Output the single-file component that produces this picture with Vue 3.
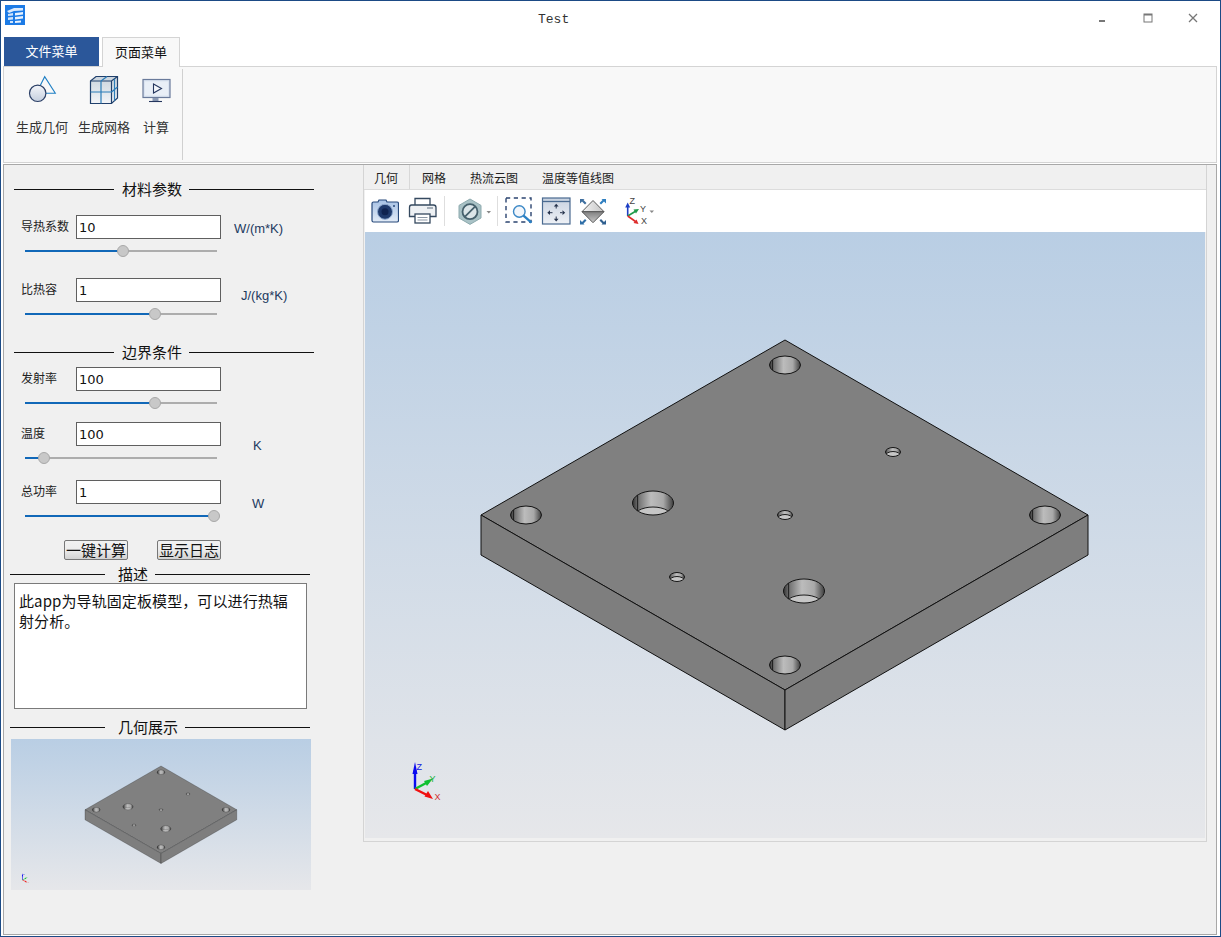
<script setup>
const fields = [
  { label: '导热系数', value: '10', unit: 'W/(m*K)', cls: 'f1', thumb: 98 },
  { label: '比热容', value: '1', unit: 'J/(kg*K)', cls: 'f2', thumb: 130 },
]
const fields2 = [
  { label: '发射率', value: '100', unit: '', cls: 'f3', thumb: 130 },
  { label: '温度', value: '100', unit: 'K', cls: 'f4', thumb: 19 },
  { label: '总功率', value: '1', unit: 'W', cls: 'f5', thumb: 189 },
]
const tabs = ['几何', '网格', '热流云图', '温度等值线图']
const holes = [
  { x: 785, y: 365, rx: 15.5, ry: 9, seam: 0.8 },
  { x: 526, y: 515, rx: 15.5, ry: 9, seam: 0.8 },
  { x: 1045, y: 515, rx: 15.5, ry: 9, seam: 0.8 },
  { x: 785, y: 665, rx: 15.5, ry: 9, seam: 0.8 },
  { x: 653, y: 503, rx: 20.5, ry: 12, seam: 0.75, floor: 16 },
  { x: 804, y: 591, rx: 20.5, ry: 12, seam: 0.75, floor: 16 },
  { x: 893, y: 452, rx: 7.5, ry: 4.5, floor: 4 },
  { x: 785, y: 515, rx: 7.5, ry: 4.5, floor: 4 },
  { x: 677, y: 577, rx: 7.5, ry: 4.5, floor: 4 },
]
</script>

<template>
  <div class="window">
    <header class="titlebar">
      <svg class="logo" width="20" height="20" viewBox="0 0 20 20">
        <rect width="20" height="20" fill="#1c7be6" />
        <path d="M2 6 L9 3 L18 3 L18 5.5 L9 6 L4 8 Z" fill="#dbeafc" />
        <path d="M3 9 L8 8 L8 10.5 L3 11 Z M3 12.5 L8 12 L8 14.5 L3 15 Z M5 16 L8 16 L8 18 L5 18 Z" fill="#cfe3fb" />
        <path d="M10 8 L18 7 L18 9.5 L10 10.5 Z M10 12 L18 11 L18 13.5 L10 14.5 Z M10 16 L16 15.5 L16 17.5 L10 18 Z" fill="#eaf3fe" />
      </svg>
      <div class="title">Test</div>
      <div class="controls">
        <span class="ctl"><svg width="10" height="10" viewBox="0 0 10 10"><rect x="1" y="7" width="6" height="2" fill="#777" /></svg></span>
        <span class="ctl"><svg width="10" height="10" viewBox="0 0 10 10"><rect x="1" y="1" width="8" height="8" fill="none" stroke="#777" /><rect x="1" y="1" width="8" height="1.5" fill="#777" /></svg></span>
        <span class="ctl"><svg width="10" height="10" viewBox="0 0 10 10"><path d="M1 1 L9 9 M9 1 L1 9" stroke="#777" stroke-width="1.3" /></svg></span>
      </div>
    </header>

    <nav class="menutabs">
      <div class="mtab file">文件菜单</div>
      <div class="mtab page">页面菜单</div>
    </nav>

    <section class="ribbon">
      <div class="rgroup">
        <div class="rbtn b1">
          <svg width="30" height="30" viewBox="27 76 30 30">
            <defs>
              <linearGradient id="gBall" x1="0" y1="0" x2="0" y2="1"><stop offset="0" stop-color="#f4f6fa" /><stop offset="1" stop-color="#c4cede" /></linearGradient>
              <linearGradient id="gCube" x1="0" y1="0" x2="0" y2="1"><stop offset="0" stop-color="#c9d3dc" /><stop offset="1" stop-color="#f3f5f8" /></linearGradient>
            </defs>
            <path d="M40 87 L44.7 77.7 L55.3 94.3 L45.5 94.3" fill="none" stroke="#1f7fc4" stroke-width="1.1" />
            <circle cx="37.7" cy="94.3" r="8.2" fill="url(#gBall)" stroke="#2b3f66" stroke-width="1.2" />
          </svg>
          <span>生成几何</span>
        </div>
        <div class="rbtn b2">
          <svg width="30" height="30" viewBox="89 75 30 30">
            <path d="M90.5 81 L96 76.5 L117.5 76.5 L117.5 98 L111.5 103.5 L90.5 103.5 Z" fill="url(#gCube)" stroke="#20406c" stroke-width="1.2" />
            <path d="M90.5 81 L111.5 81 L117.5 76.5 M111.5 81 L111.5 103.5" fill="none" stroke="#20406c" stroke-width="1.2" />
            <path d="M101 81 L101 103.5 M90.5 92 L111.5 92 M101 81 L107 76.5 M114.5 78.8 L114.5 100.7 M111.5 92 L117.5 87" fill="none" stroke="#2b7cb8" stroke-width="1.2" />
          </svg>
          <span>生成网格</span>
        </div>
        <div class="rbtn b3">
          <svg width="30" height="30" viewBox="141 75 30 30">
            <rect x="143" y="79.5" width="27" height="18" fill="#dbe4f1" stroke="#6a7b9b" stroke-width="1.2" />
            <rect x="145" y="81.5" width="23" height="14" fill="#e9eff7" />
            <path d="M153.5 84 L161.5 88.5 L153.5 93 Z" fill="#f3f6fb" stroke="#24365e" stroke-width="1.1" />
            <rect x="152.5" y="98" width="6" height="3" fill="#8a99b3" />
            <path d="M149 101.5 L162 101.5" stroke="#24365e" stroke-width="1.1" />
          </svg>
          <span>计算</span>
        </div>
      </div>
    </section>

    <main class="frame">
      <aside class="panel">
        <div class="sec s1"><i class="ln"></i><b>材料参数</b><i class="ln r"></i></div>
        <template v-for="f in fields" :key="f.label">
          <div class="field" :class="f.cls">
            <label>{{ f.label }}</label>
            <div class="inp">{{ f.value }}</div>
            <span class="unit">{{ f.unit }}</span>
          </div>
          <div class="slider">
            <i class="fill" :style="{ width: f.thumb + 'px' }"></i>
            <i class="thumb" :style="{ left: f.thumb - 6 + 'px' }"></i>
          </div>
        </template>

        <div class="sec s2"><i class="ln"></i><b>边界条件</b><i class="ln r"></i></div>
        <template v-for="f in fields2" :key="f.label">
          <div class="field" :class="f.cls">
            <label>{{ f.label }}</label>
            <div class="inp">{{ f.value }}</div>
            <span class="unit">{{ f.unit }}</span>
          </div>
          <div class="slider">
            <i class="fill" :style="{ width: f.thumb + 'px' }"></i>
            <i class="thumb" :style="{ left: f.thumb - 6 + 'px' }"></i>
          </div>
        </template>

        <div class="actions">
          <button type="button">一键计算</button>
          <button type="button">显示日志</button>
        </div>

        <div class="sec s3"><i class="ln"></i><b>描述</b><i class="ln r"></i></div>
        <div class="desc">此app为导轨固定板模型，可以进行热辐<br />射分析。</div>

        <div class="sec s4"><i class="ln"></i><b>几何展示</b><i class="ln r"></i></div>
        <svg class="thumbview" width="300" height="151" viewBox="185 232 1200 604">
          <use href="#plateScene" />
          <use href="#axisMark" transform="translate(-184 7)" />
        </svg>
      </aside>

      <section class="pane">
        <div class="vtabs">
          <div v-for="(t, i) in tabs" :key="t" class="vtab" :class="{ on: i === 0 }">{{ t }}</div>
        </div>
        <div class="toolbar">
          <svg class="t1" width="28" height="42" viewBox="371 190 28 42">
            <defs>
              <linearGradient id="gCam" x1="0" y1="0" x2="0" y2="1"><stop offset="0" stop-color="#a5c0e4" /><stop offset="1" stop-color="#e2ebf7" /></linearGradient>
              <linearGradient id="gFit" x1="0" y1="0" x2="0" y2="1"><stop offset="0" stop-color="#c8d2e0" /><stop offset="1" stop-color="#eef1f6" /></linearGradient>
              <linearGradient id="gIsoT" x1="0" y1="0" x2="1" y2="0"><stop offset="0" stop-color="#f4f4f4" /><stop offset="1" stop-color="#c4c4c4" /></linearGradient>
              <linearGradient id="gIsoB" x1="0" y1="0" x2="0" y2="1"><stop offset="0" stop-color="#808080" /><stop offset="1" stop-color="#c8c8c8" /></linearGradient>
            </defs>
            <path d="M373.5 202 L378 202 L379 200 L386 200 L387 202 L397 202 Q398.5 202 398.5 203.5 L398.5 220.5 Q398.5 222 397 222 L373.5 222 Q372 222 372 220.5 L372 203.5 Q372 202 373.5 202 Z" fill="url(#gCam)" stroke="#27497b" stroke-width="1.2" />
            <circle cx="385" cy="211.8" r="7.5" fill="#1f3a6c" stroke="#8ea9cf" />
            <circle cx="385" cy="211.8" r="3.5" fill="#0f2350" />
            <circle cx="394" cy="206" r="1" fill="#27497b" />
          </svg>
          <svg class="t2" width="29" height="42" viewBox="408 190 29 42">
            <path d="M415 205 L415 198.5 L430 198.5 L430 205" fill="#fff" stroke="#35495f" stroke-width="1.3" />
            <path d="M411.5 205 L433.5 205 Q436 205 436 207.5 L436 216.5 L430 216.5 L415 216.5 L409.5 216.5 L409.5 207.5 Q409.5 205 411.5 205 Z" fill="#eef1f4" stroke="#35495f" stroke-width="1.3" />
            <rect x="415" y="214" width="15" height="9" fill="#fff" stroke="#35495f" stroke-width="1.3" />
            <path d="M417.5 217.5 L427.5 217.5 M417.5 220 L427.5 220" stroke="#8b97a5" />
            <path d="M427 208 L433 208" stroke="#8b97a5" stroke-width="1.5" />
          </svg>
          <i class="sep s-a"></i>
          <svg class="t3" width="34" height="42" viewBox="458 190 34 42">
            <path d="M470 199 L481 205.4 L481 218 L470 224.4 L459 218 L459 205.4 Z" fill="#a9c2c6" stroke="#8daaae" />
            <circle cx="470" cy="211.7" r="7.5" fill="#dbe5e8" stroke="#45606c" stroke-width="1.8" />
            <path d="M465 216.7 L475 206.7" stroke="#45606c" stroke-width="1.8" />
            <path d="M486.5 211 L491 211 L488.8 213.5 Z" fill="#888" />
          </svg>
          <i class="sep s-b"></i>
          <svg class="t4" width="29" height="42" viewBox="504 190 29 42">
            <rect x="506" y="198" width="25" height="24" fill="none" stroke="#2b4470" stroke-width="1.4" stroke-dasharray="4.2 3.6" />
            <circle cx="519.3" cy="211.5" r="5.8" fill="#f2f6fb" stroke="#3b88c6" stroke-width="1.4" />
            <path d="M523.5 215.7 L531.5 222.7" stroke="#2a80c4" stroke-width="2.4" />
          </svg>
          <svg class="t5" width="30" height="42" viewBox="541 190 30 42">
            <rect x="542.5" y="198" width="27.5" height="26" fill="url(#gFit)" stroke="#4a6a90" stroke-width="1.2" />
            <path d="M542.5 201.5 L570 201.5" stroke="#4a6a90" stroke-width="1.3" />
            <path d="M556.2 203.8 L553.8 206.5 L558.6 206.5 Z M556.2 221.5 L553.8 218.8 L558.6 218.8 Z M547.3 212.7 L550 210.3 L550 215.1 Z M565.2 212.7 L562.5 210.3 L562.5 215.1 Z" fill="#26334c" />
            <path d="M556.2 206 L556.2 208.5 M556.2 216.5 L556.2 219 M550 212.7 L552.5 212.7 M560 212.7 L562.5 212.7" stroke="#26334c" />
          </svg>
          <svg class="t6" width="30" height="42" viewBox="578 190 30 42">
            <path d="M593 200.5 L604 211.7 L582 211.7 Z" fill="url(#gIsoT)" stroke="#5a5a5a" stroke-width="1" />
            <path d="M582 211.7 L604 211.7 L593 222.7 Z" fill="url(#gIsoB)" stroke="#5a5a5a" stroke-width="1" />
            <path d="M580 199 L584.5 199 L583.5 200 L586.5 203 L585 204.5 L582 201.5 L580 203.5 Z" fill="#3f6f9f" />
            <path d="M606 199 L601.5 199 L602.5 200 L599.5 203 L601 204.5 L604 201.5 L606 203.5 Z" fill="#2f7fc0" />
            <path d="M580 224.5 L584.5 224.5 L583.5 223.5 L586.5 220.5 L585 219 L582 222 L580 220 Z" fill="#2f6fa8" />
            <path d="M606 224.5 L601.5 224.5 L602.5 223.5 L599.5 220.5 L601 219 L604 222 L606 220 Z" fill="#2f5f8f" />
          </svg>
          <svg class="t7" width="34" height="42" viewBox="623 190 34 42">
            <path d="M627.7 216 L627.7 206" stroke="#1d3fc4" stroke-width="1.6" />
            <path d="M627.7 202.5 L625.2 207.5 L630.2 207.5 Z" fill="#1d3fc4" />
            <path d="M627.7 216 L636 211" stroke="#1f9a4a" stroke-width="1.6" />
            <path d="M639 209 L633.5 209.5 L636 213.5 Z" fill="#1f9a4a" />
            <path d="M627.7 216 L635.5 221.5" stroke="#dd2a2a" stroke-width="1.6" />
            <path d="M638.5 224 L636.5 219.5 L633.5 223 Z" fill="#dd2a2a" />
            <text x="629.5" y="204" class="axt">Z</text>
            <text x="640" y="211.5" class="axt">Y</text>
            <text x="641" y="224" class="axt">X</text>
            <path d="M649.5 210.5 L654 210.5 L651.8 213 Z" fill="#888" />
          </svg>
        </div>
        <div class="viewport">
          <svg width="840" height="606" viewBox="365 232 840 606">
            <defs>
              <linearGradient id="gHole" x1="0" y1="0" x2="1" y2="0">
                <stop offset="0" stop-color="#333" />
                <stop offset=".12" stop-color="#6c6c6c" />
                <stop offset=".45" stop-color="#bcbcbc" />
                <stop offset=".75" stop-color="#a8a8a8" />
                <stop offset="1" stop-color="#3e3e3e" />
              </linearGradient>
              <clipPath v-for="(h, i) in holes" :id="'hc' + i" :key="i">
                <ellipse :cx="h.x" :cy="h.y" :rx="h.rx" :ry="h.ry" />
              </clipPath>
              <g id="plateScene">
                <path d="M785 340 L1088 515 L785 690 L481 515 Z" fill="#808080" stroke="#111" />
                <path d="M481 515 L785 690 L785 730 L481 555 Z" fill="#7e7e7e" stroke="#111" />
                <path d="M785 690 L1088 515 L1088 555 L785 730 Z" fill="#7e7e7e" stroke="#111" />
                <g v-for="(h, i) in holes" :key="i">
                  <ellipse :cx="h.x" :cy="h.y" :rx="h.rx" :ry="h.ry" fill="url(#gHole)" />
                  <g :clip-path="'url(#hc' + i + ')'">
                    <ellipse v-if="h.floor" :cx="h.x" :cy="h.y + h.floor" :rx="h.rx" :ry="h.ry" fill="#c6c6c6" stroke="#1c1c1c" />
                    <path v-if="h.seam" :d="'M' + (h.x - h.rx * h.seam) + ' ' + (h.y - h.ry) + ' V' + (h.y + h.ry)" stroke="#1c1c1c" />
                  </g>
                  <ellipse :cx="h.x" :cy="h.y" :rx="h.rx" :ry="h.ry" fill="none" stroke="#151515" />
                </g>
              </g>
              <g id="axisMark">
                <path d="M415 789 L415 770" stroke="#0a0af0" stroke-width="2.4" />
                <path d="M415 762 L412.5 774 L417.5 774 Z" fill="#0a0af0" />
                <path d="M415 789 L428 782" stroke="#10c030" stroke-width="2.4" />
                <path d="M433 778.5 L424 781 L427 786 Z" fill="#10c030" />
                <path d="M415 789 L427 795" stroke="#f01010" stroke-width="2.4" />
                <path d="M433 799 L428 791 L424.5 796.5 Z" fill="#f01010" />
                <text x="416.5" y="769.5" class="ax" fill="#1020e0">Z</text>
                <text x="429.5" y="782" class="ax" fill="#20b040">Y</text>
                <text x="434.5" y="800" class="ax" fill="#d03030">X</text>
              </g>
            </defs>
            <use href="#plateScene" />
            <use href="#axisMark" />
          </svg>
        </div>
      </section>
    </main>
  </div>
</template>

<style>
html, body { margin: 0; padding: 0; background: #fff; }
</style>

<style scoped>
.window {
  width: 1221px;
  height: 937px;
  box-sizing: border-box;
  border: 1px solid #1b4a85;
  background: #fff;
  overflow: hidden;
  font-family: "Noto Sans CJK SC", "Liberation Sans", sans-serif;
  color: #111;
  font-size: 12px;
}
.titlebar { height: 36px; display: flex; align-items: flex-start; position: relative; }
.logo { margin: 4px 0 0 4px; }
.title {
  margin-left: 513px;
  margin-top: 11px;
  font: 13px/16px "Liberation Mono", monospace;
  color: #333;
  width: 40px;
}
.controls { margin-left: auto; margin-right: 5px; display: flex; }
.ctl { width: 45px; height: 33px; display: flex; align-items: center; justify-content: center; }
.menutabs { display: flex; height: 29px; padding-left: 3px; gap: 3px; }
.mtab { font-size: 13px; display: flex; align-items: center; justify-content: center; box-sizing: border-box; padding-bottom: 2px; }
.mtab.file { width: 95px; height: 29px; background: #2b579a; color: #fff; }
.mtab.page {
  width: 78px; height: 30px;
  background: #f8f8f8;
  border: 1px solid #d4d4d4;
  border-bottom: none;
  position: relative;
  z-index: 1;
}
.ribbon {
  margin: 0 3px 0 2px;
  height: 97px;
  box-sizing: border-box;
  background: #f8f8f8;
  border: 1px solid #d4d4d4;
  padding: 2px 0 1px;
}
.rgroup {
  width: 178px;
  height: 91px;
  border-right: 1px solid #d0d0d0;
  position: relative;
  display: flex;
}
.rbtn {
  display: flex;
  flex-direction: column;
  align-items: center;
  font-size: 13px;
  line-height: 18px;
  color: #333;
  white-space: nowrap;
}
.rbtn svg { display: block; margin-top: 6px; margin-bottom: 13px; }
.rbtn span { display: block; }
.b1 { margin-left: 11px; width: 54px; }
.b2 { margin-left: 8px; width: 54px; }
.b3 { margin-left: 10px; width: 30px; }

.frame {
  margin: 1px 3px 0 2px;
  height: 771px;
  box-sizing: border-box;
  border: 1px solid #a8a8a8;
  background: #f0f0f0;
  display: flex;
  align-items: flex-start;
}
.panel { width: 359px; padding-top: 14px; flex: none; }
.sec { display: flex; align-items: center; height: 20px; margin-left: 10px; width: 300px; }
.sec b { font-weight: 400; font-size: 15px; line-height: 20px; white-space: nowrap; margin: 0 7px 0 8px; }
.sec .ln { display: block; height: 1px; background: #111; width: 100px; flex: none; }
.sec .ln.r { flex: 1; width: auto; }
.s2 { margin-top: 22px; }
.s3 { margin-top: 5px; margin-left: 6px; height: 18px; }
.s4 { margin-top: 8px; margin-left: 6px; }
.s3 .ln:first-child, .s4 .ln:first-child { width: 95px; }
.s3 b, .s4 b { margin-left: 13px; }

.field { display: flex; align-items: flex-start; height: 24px; margin-left: 17px; }
.field label { width: 55px; height: 22px; line-height: 22px; font-size: 12px; color: #222; flex: none; white-space: nowrap; }
.inp {
  width: 145px; height: 24px; box-sizing: border-box;
  background: #fff; border: 1px solid #5f5f5f;
  font: 13px/23px "DejaVu Sans", sans-serif;
  padding-left: 2px; flex: none;
}
.unit { font: 13px/16px "Liberation Sans", sans-serif; color: #1c3a60; white-space: nowrap; }
.f1 { margin-top: 16px; } .f1 .unit { margin: 6px 0 0 13px; }
.f2 { margin-top: 21px; } .f2 .unit { margin: 10px 0 0 20px; }
.f3 { margin-top: 5px; }
.f4 { margin-top: 13px; } .f4 .unit { margin: 16px 0 0 32px; }
.f5 { margin-top: 16px; } .f5 .unit { margin: 16px 0 0 31px; }

.slider { position: relative; width: 192px; height: 12px; margin: 6px 0 0 21px; }
.slider::before { content: ""; position: absolute; left: 0; right: 0; top: 5px; height: 2px; background: #adadad; }
.fill { position: absolute; left: 0; top: 5px; height: 2px; background: #1168b8; display: block; }
.thumb {
  position: absolute; top: 0; width: 12px; height: 12px; box-sizing: border-box;
  border-radius: 50%; background: #c8c8c8; border: 1px solid #a8a8a8; display: block;
}
.actions { display: flex; gap: 29px; margin: 18px 0 0 60px; }
.actions button {
  width: 64px; height: 20px; padding: 0; box-sizing: border-box;
  border: 1px solid #777; border-radius: 2px;
  background: linear-gradient(#f2f2f2 0, #ececec 50%, #d2d2d2 100%);
  font: 15px/18px "Noto Sans CJK SC", sans-serif; color: #111;
}
.desc {
  margin-left: 10px; width: 293px; height: 126px; box-sizing: border-box;
  background: #fff; border: 1px solid #7a7a7a;
  padding: 7px 4px 0;
  font-size: 15px; line-height: 20px; color: #111;
  letter-spacing: .1px;
  white-space: nowrap;
}
.thumbview {
  display: block; margin: 2px 0 0 7px;
  background: linear-gradient(#b9cee4, #e6e7ea);
}

.pane {
  width: 844px; height: 677px; box-sizing: border-box;
  border-left: 1px solid #d4d4d4;
  border-right: 1px solid #d4d4d4;
  border-bottom: 1px solid #d4d4d4;
  flex: none;
}
.vtabs { height: 24px; display: flex; border-bottom: 1px solid #dcdcdc; box-sizing: content-box; }
.vtab { padding: 0 12px; line-height: 25px; font-size: 12px; color: #222; }
.vtab.on { padding: 0 11px 0 10px; border-right: 1px solid #d8d8d8; }
.toolbar { height: 42px; margin-left: 1px; background: #fff; display: flex; padding-left: 6px; }
.toolbar svg { flex: none; display: block; }
.t2 { margin-left: 9px; }
.sep { display: block; width: 1px; height: 30px; margin-top: 6px; background: #dedede; flex: none; }
.s-a { margin-left: 7px; }
.t3 { margin-left: 13px; }
.s-b { margin-left: 5px; }
.t4 { margin-left: 6px; }
.t5 { margin-left: 8px; }
.t6 { margin-left: 7px; }
.t7 { margin-left: 15px; }
.axt { font: 9px "Liberation Sans", sans-serif; fill: #444; }
.ax { font: 9px "Liberation Sans", sans-serif; }
.viewport {
  margin-left: 1px; width: 840px; height: 606px;
  background: linear-gradient(#b9cee4, #e6e7ea);
}
.viewport svg { display: block; }
</style>
